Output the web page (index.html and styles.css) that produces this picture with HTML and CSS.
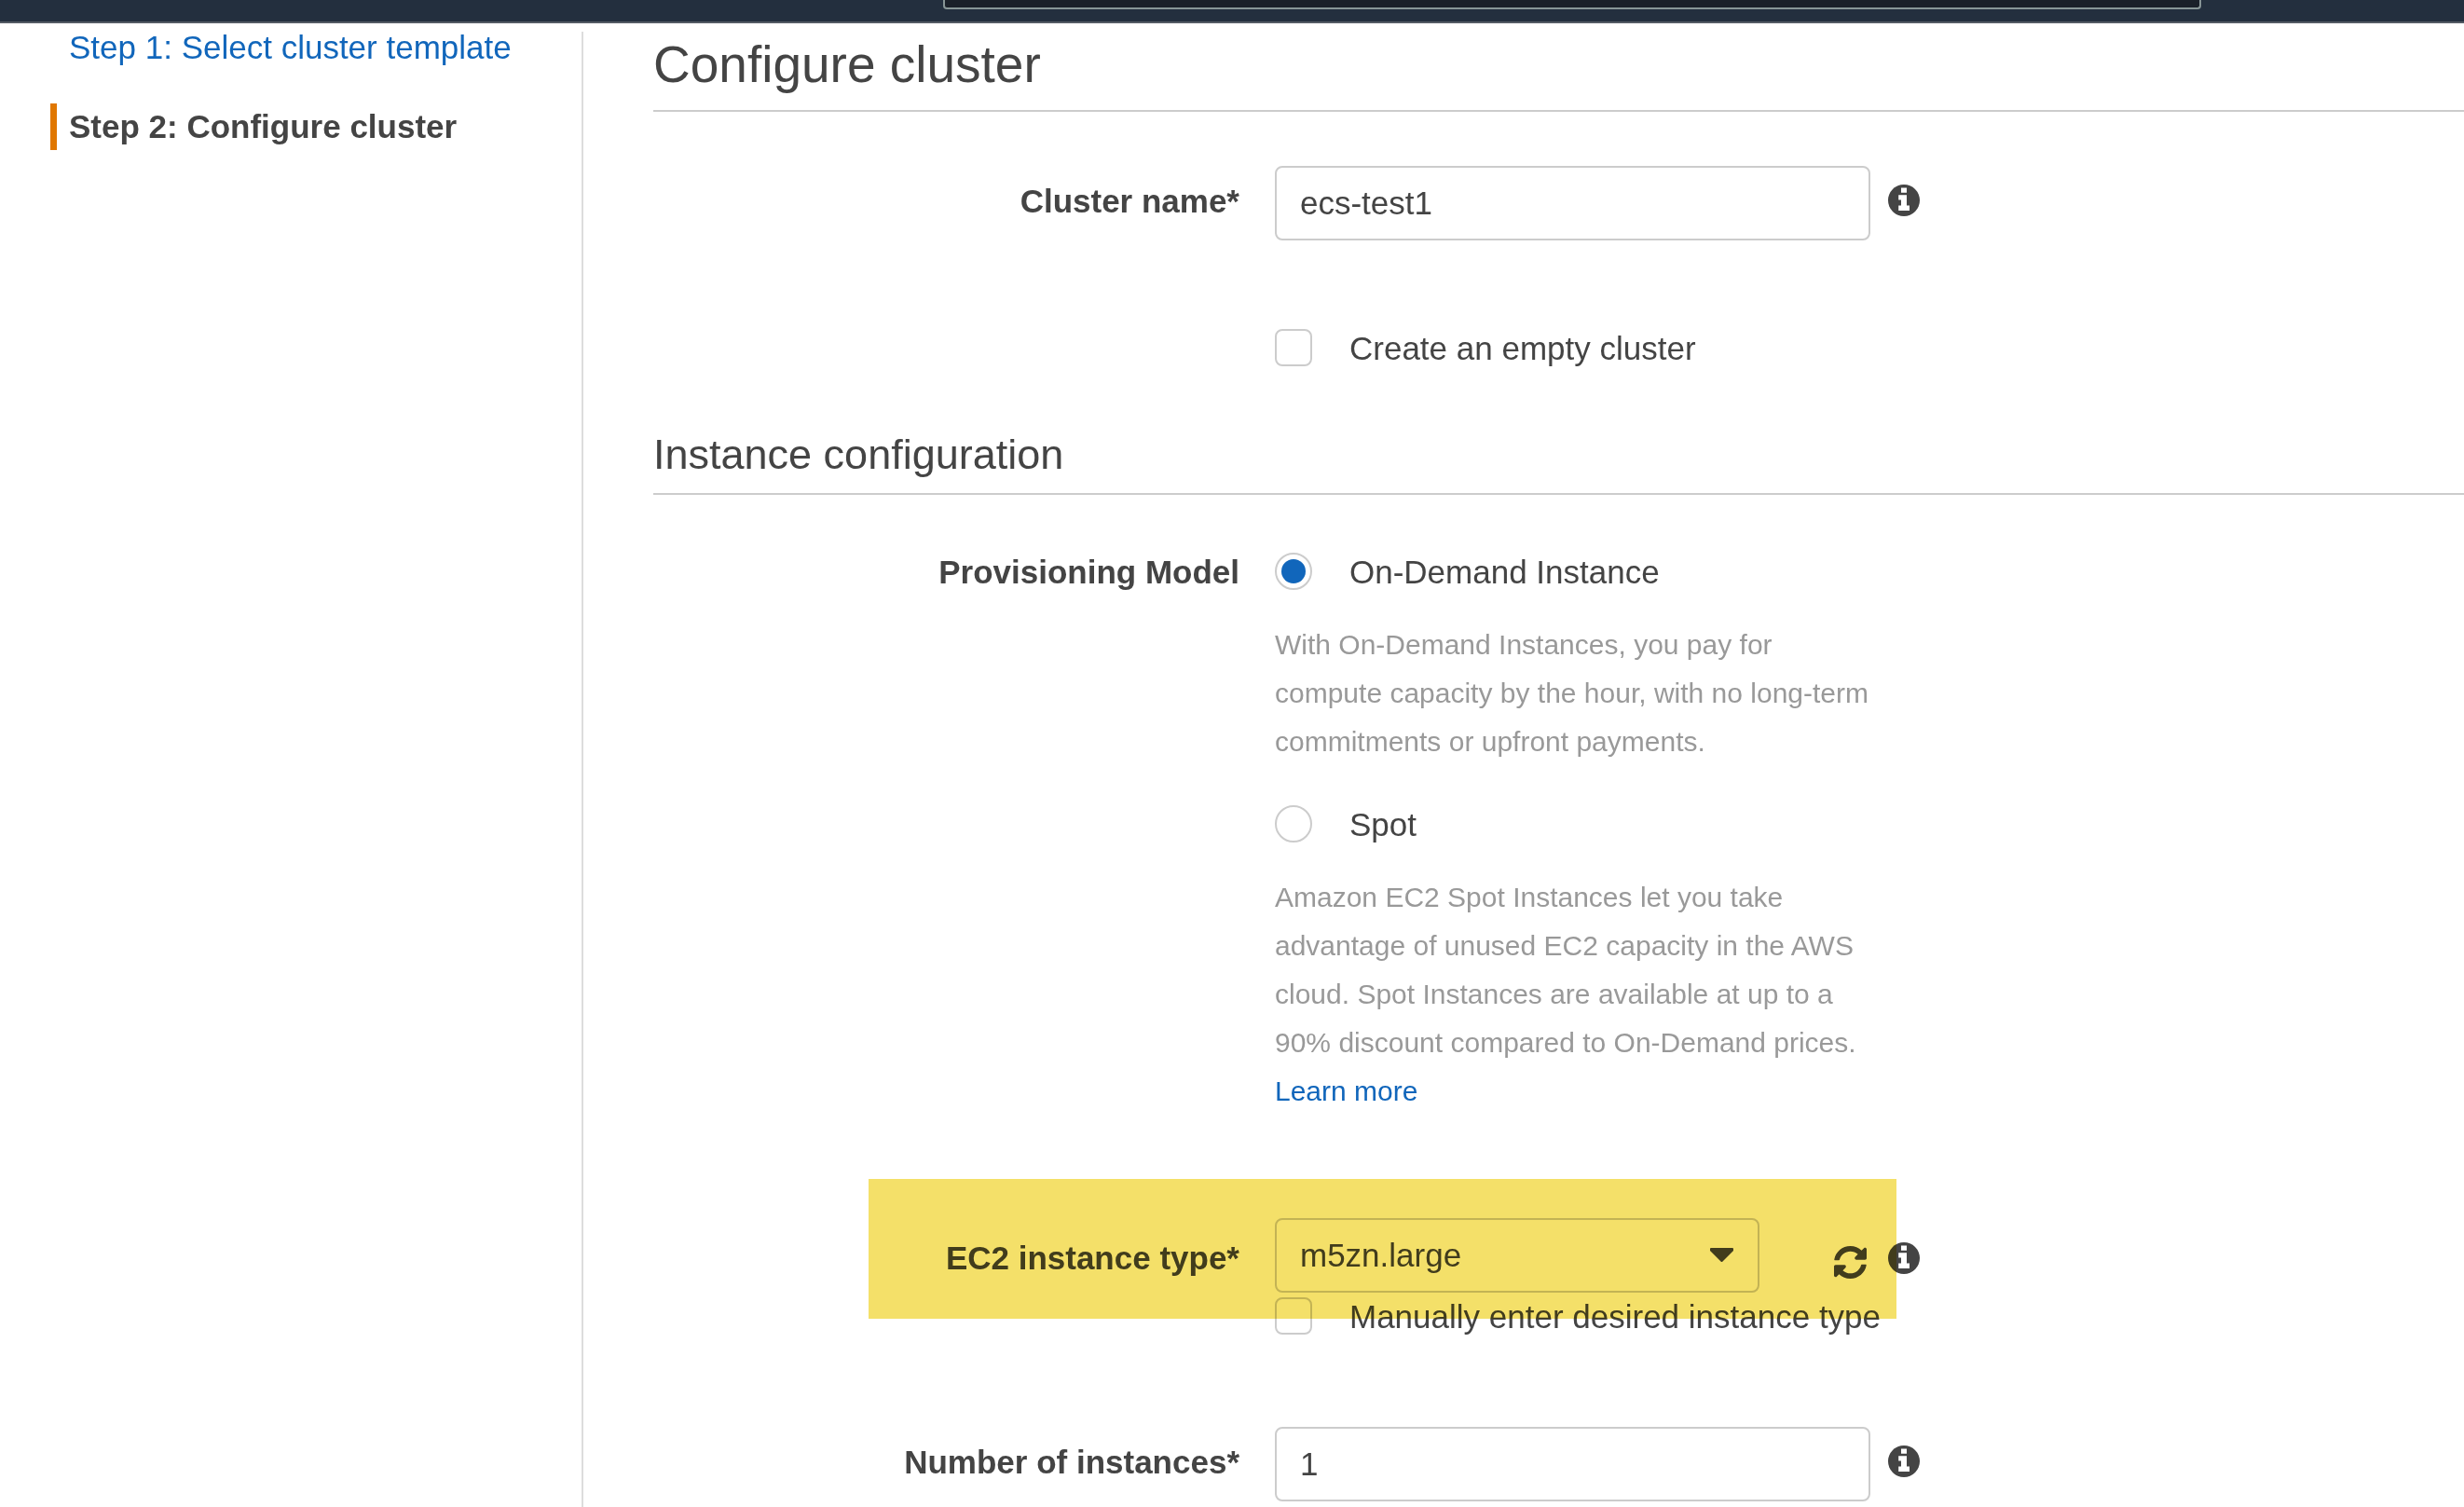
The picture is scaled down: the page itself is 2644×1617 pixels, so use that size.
FILE: index.html
```html
<!DOCTYPE html>
<html lang="en">
<head>
<meta charset="utf-8">
<meta name="viewport" content="width=device-width, initial-scale=1">
<title>Configure cluster</title>
<link rel="stylesheet" href="styles.css">
</head>
<body>
<svg class="sprite" aria-hidden="true">
  <symbol id="icon-info" viewBox="0 0 34 34">
    <circle cx="17" cy="17" r="17" fill="currentColor"/>
    <path fill="#fff" d="M14 3.5h6v5.2h-6zM11.2 11.2H20v11.3h3V28H11.2v-5.5H14v-6h-2.8z"/>
  </symbol>
  <symbol id="icon-refresh" viewBox="8 8 496 496">
    <path fill="currentColor" d="M370.72 133.28C339.458 104.008 298.888 87.962 255.848 88c-77.458.068-144.328 53.178-162.791 126.85-1.344 5.363-6.122 9.15-11.651 9.15H24.103c-7.498 0-13.194-6.807-11.807-14.176C33.933 94.924 134.813 8 256 8c66.448 0 126.791 26.136 171.315 68.685L463.03 40.97C478.149 25.851 504 36.559 504 57.941V192c0 13.255-10.745 24-24 24H345.941c-21.382 0-32.09-25.851-16.971-40.971l41.75-41.749zM32 296h134.059c21.382 0 32.09 25.851 16.971 40.971l-41.75 41.75c31.262 29.273 71.835 45.319 114.876 45.28 77.418-.07 144.315-53.144 162.787-126.849 1.344-5.363 6.122-9.15 11.651-9.15h57.304c7.498 0 13.194 6.807 11.807 14.176C478.067 417.076 377.187 504 256 504c-66.448 0-126.791-26.136-171.315-68.685L48.97 471.03C33.851 486.149 8 475.441 8 454.059V320c0-13.255 10.745-24 24-24z"/>
  </symbol>
</svg>

<header class="topbar">
  <input class="topbar-search" type="search" aria-label="Search">
</header>

<div class="layout">
  <nav class="steps" aria-label="Wizard steps">
    <a class="step" href="#template">Step 1: Select cluster template</a>
    <a class="step step-current" href="#configure" aria-current="step">Step 2: Configure cluster</a>
  </nav>

  <main class="content">
    <h1 class="page-title">Configure cluster</h1>

    <div class="row row-name">
      <label class="row-label" for="cluster-name">Cluster name*</label>
      <input class="text-input" id="cluster-name" type="text" value="ecs-test1">
      <button class="icon-button info" type="button" aria-label="About cluster name"><svg class="icon"><use href="#icon-info"/></svg></button>
    </div>

    <div class="row row-empty">
      <label class="option row-field">
        <input class="tick" type="checkbox">
        <span>Create an empty cluster</span>
      </label>
    </div>

    <h2 class="section-title">Instance configuration</h2>

    <div class="row row-model" role="radiogroup" aria-labelledby="model-label">
      <span class="row-label" id="model-label">Provisioning Model</span>
      <div class="row-field">
        <label class="option">
          <input class="tick dot" type="radio" name="model" checked>
          <span>On-Demand Instance</span>
        </label>
        <p class="hint">With On-Demand Instances, you pay for compute capacity by the hour, with no long-term commitments or upfront payments.</p>
        <label class="option option-next">
          <input class="tick dot" type="radio" name="model">
          <span>Spot</span>
        </label>
        <p class="hint">Amazon EC2 Spot Instances let you take advantage of unused EC2 capacity in the AWS cloud. Spot Instances are available at up to a 90% discount compared to On-Demand prices. <a href="#learn-more">Learn more</a></p>
      </div>
    </div>

    <div class="row row-type">
      <label class="row-label" for="instance-type">EC2 instance type*</label>
      <div class="row-field">
        <div class="picker">
          <div class="select-box">
            <select class="select" id="instance-type"><option>m5zn.large</option></select>
            <svg class="caret" viewBox="0 0 25 15" aria-hidden="true"><path fill="currentColor" d="M1 0h23q1 0 1 1v2L13.500 14.500q-1 1-2 0L0 3V1q0-1 1-1z"/></svg>
          </div>
          <button class="icon-button refresh" type="button" aria-label="Refresh instance types"><svg class="icon"><use href="#icon-refresh"/></svg></button>
        </div>
        <label class="option option-manual">
          <input class="tick" type="checkbox">
          <span>Manually enter desired instance type</span>
        </label>
      </div>
      <button class="icon-button info" type="button" aria-label="About instance type"><svg class="icon"><use href="#icon-info"/></svg></button>
      <div class="highlight"></div>
    </div>

    <div class="row row-count">
      <label class="row-label" for="instance-count">Number of instances*</label>
      <input class="text-input" id="instance-count" type="text" inputmode="numeric" value="1">
      <button class="icon-button info" type="button" aria-label="About number of instances"><svg class="icon"><use href="#icon-info"/></svg></button>
    </div>
  </main>
</div>
</body>
</html>
```
FILE: styles.css
```css
*,
*::before,
*::after {
  box-sizing: border-box;
}

body {
  display: flex;
  flex-direction: column;
  min-height: 100vh;
  margin: 0;
  background: #fff;
  color: #444;
  font: 35px/42px "Liberation Sans", Arial, sans-serif;
}

a {
  color: #1166bb;
  text-decoration: none;
}

input,
select,
button {
  margin: 0;
  color: inherit;
  font: inherit;
}

.sprite {
  display: none;
}

/* Top bar */
.topbar {
  display: grid;
  grid-template-columns: 1012fr 1350fr 282fr;
  height: 25px;
  border-bottom: 2px solid #545b64;
  background: #232f3e;
}

.topbar-search {
  grid-column: 2;
  width: 100%;
  height: 10px;
  padding: 0;
  border: 2px solid #879596;
  border-top: 0;
  border-radius: 0 0 4px 4px;
  background: #1a2029;
  appearance: none;
}

/* Page columns */
.layout {
  display: grid;
  flex: 1;
  grid-template-columns: minmax(0, 624fr) minmax(0, 2020fr);
}

.steps {
  display: flex;
  flex-direction: column;
  gap: 35px;
  padding: 1px 0 0 54px;
}

.step {
  padding-left: 13px;
  border-left: 7px solid transparent;
  line-height: 50px;
}

.step-current {
  border-color: #e07700;
  color: #444;
  font-weight: bold;
}

.content {
  margin-top: 9px;
  padding: 5px 0 0 75px;
  border-left: 2px solid #ddd;
}

.page-title,
.section-title {
  margin: 0;
  border-bottom: 2px solid #ccc;
  font-weight: normal;
}

.page-title {
  padding-bottom: 19px;
  font-size: 55px;
  line-height: 60px;
}

.section-title {
  margin-top: 68px;
  padding-bottom: 16px;
  font-size: 45px;
  line-height: 50px;
}

/* Form rows: label, field, info button */
.row {
  display: grid;
  grid-template-columns: minmax(0, 629fr) 38px minmax(0, 639fr) 19px minmax(0, 618fr);
  align-items: start;
}

.row-label {
  grid-column: 1;
  padding-top: 17px;
  font-weight: bold;
  text-align: right;
}

.row-field,
.text-input {
  grid-column: 3;
}

.row-name {
  margin-top: 58px;
}

.row-empty {
  margin-top: 95px;
}

.row-model {
  margin-top: 62px;
}

.row-model .row-label {
  padding-top: 0;
}

.row-type {
  position: relative;
  margin-top: 110px;
}

.row-type .row-label {
  padding-top: 22px;
}

.row-count {
  margin-top: 97px;
}

/* Controls */
.text-input,
.select {
  width: 100%;
  height: 80px;
  padding: 0 25px;
  border: 2px solid #ccc;
  border-radius: 8px;
  background: #fff;
  appearance: none;
}

.option {
  display: flex;
  gap: 40px;
  align-items: flex-start;
  white-space: nowrap;
}

.option-next {
  margin-top: 42px;
}

.option-manual {
  margin-top: 5px;
}

.tick {
  flex: none;
  width: 40px;
  height: 40px;
  border: 2px solid #ccc;
  border-radius: 8px;
  background: #fff;
  appearance: none;
}

.dot {
  display: grid;
  place-items: center;
  border-radius: 50%;
}

.dot:checked::before {
  width: 26px;
  height: 26px;
  border-radius: 50%;
  background: #1166bb;
  content: "";
}

.hint {
  margin: 31px 0 0;
  color: #999;
  font-size: 30px;
  line-height: 52px;
}

.picker {
  display: flex;
  align-items: flex-start;
  justify-content: space-between;
  padding-right: 4px;
}

.select-box {
  position: relative;
  flex: 0 1 520px;
}

.select {
  display: block;
}

.caret {
  position: absolute;
  top: 32px;
  right: 28px;
  width: 25px;
  height: 15px;
  pointer-events: none;
}

.icon-button {
  width: 34px;
  height: 34px;
  padding: 0;
  border: 0;
  background: none;
}

.icon {
  display: block;
  width: 100%;
  height: 100%;
}

.info {
  grid-column: 5;
  margin-top: 20px;
}

.row-type .info {
  margin-top: 26px;
}

.refresh {
  width: 35px;
  height: 35px;
  margin-top: 30px;
}

/* Marker laid over the instance type row */
.highlight {
  position: absolute;
  top: -42px;
  right: 609px;
  left: 231px;
  height: 150px;
  background: #f4e069;
  mix-blend-mode: multiply;
  pointer-events: none;
}
```
